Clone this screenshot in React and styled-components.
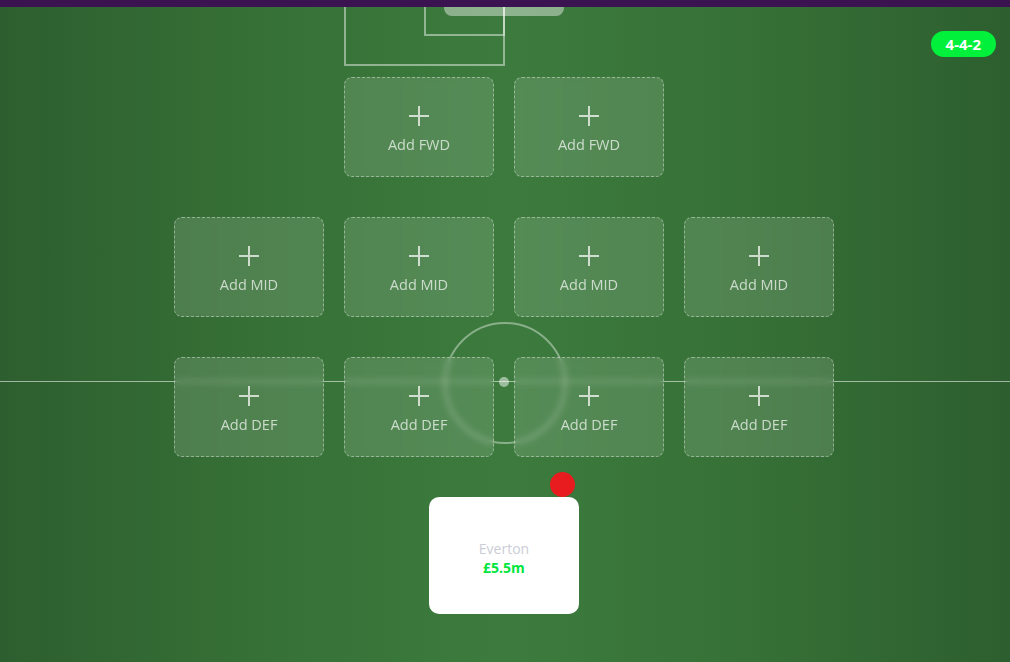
import React from 'react';
import styled, { createGlobalStyle } from 'styled-components';

const GlobalStyle = createGlobalStyle`
  html, body {
    margin: 0;
    padding: 0;
    background: #2e5f30;
  }
  body {
    font-family: "Open Sans", "Noto Sans", sans-serif;
  }
`;

const rows = [
  { pos: 'FWD', count: 2 },
  { pos: 'MID', count: 4 },
  { pos: 'DEF', count: 4 },
];

function PlusIcon() {
  return (
    <svg width="22" height="22" viewBox="0 0 22 22" fill="none">
      <path d="M11 1v20M1 11h20" stroke="rgba(255,255,255,0.72)" strokeWidth="2" />
    </svg>
  );
}

export default function App() {
  return (
    <>
      <GlobalStyle />
      <TopBar />
      <Pitch>
        {/* pitch markings */}
        <PenaltyBox />
        <SixYardBox />
        <GoalPill />
        <HalfwayLine />
        <CentreCircle />
        <CentreSpot />

        <FormationBadge>4-4-2</FormationBadge>

        <Lines>
          {rows.map(row => (
            <Row key={row.pos}>
              {Array.from({ length: row.count }).map((_, i) => (
                <EmptySlot key={i}>
                  <PlusIcon />
                  <SlotLabel>Add {row.pos}</SlotLabel>
                </EmptySlot>
              ))}
            </Row>
          ))}
          <Row>
            <PlayerCard>
              <RemoveDot />
              <Club>Everton</Club>
              <Price>£5.5m</Price>
            </PlayerCard>
          </Row>
        </Lines>
      </Pitch>
    </>
  );
}

const TopBar = styled.div`
  height: 7px;
  background: #3a1350;
`;

const Pitch = styled.div`
  position: relative;
  height: 655px;
  overflow: hidden;
  background: linear-gradient(
    90deg,
    #2d5e2f 0%,
    #367036 25%,
    #3c7b3d 50%,
    #367036 75%,
    #2d5e2f 100%
  );
`;

const PenaltyBox = styled.div`
  position: absolute;
  left: 344px;
  top: -7px;
  width: 157px;
  height: 64px;
  border: 2px solid rgba(255, 255, 255, 0.45);
  border-top: none;
`;

const SixYardBox = styled.div`
  position: absolute;
  left: 424px;
  top: -7px;
  width: 77px;
  height: 34px;
  border: 2px solid rgba(255, 255, 255, 0.45);
  border-top: none;
`;

const GoalPill = styled.div`
  position: absolute;
  left: 444px;
  top: -8px;
  width: 120px;
  height: 17px;
  border-radius: 8px;
  background: rgba(255, 255, 255, 0.42);
`;

const HalfwayLine = styled.div`
  position: absolute;
  left: 0;
  right: 0;
  top: 374px;
  height: 1px;
  background: rgba(255, 255, 255, 0.55);
`;

const CentreCircle = styled.div`
  position: absolute;
  left: 444px;
  top: 315px;
  width: 118px;
  height: 118px;
  border-radius: 50%;
  border: 2px solid rgba(255, 255, 255, 0.4);
`;

const CentreSpot = styled.div`
  position: absolute;
  left: 499px;
  top: 370px;
  width: 10px;
  height: 10px;
  border-radius: 50%;
  background: rgba(255, 255, 255, 0.5);
`;

const FormationBadge = styled.div`
  position: absolute;
  top: 24px;
  right: 14px;
  height: 26px;
  padding: 0 15px;
  border-radius: 13px;
  background: #00f03c;
  color: #fff;
  font-size: 15px;
  font-weight: 700;
  display: flex;
  align-items: center;
`;

const Lines = styled.div`
  position: relative;
  display: flex;
  flex-direction: column;
  align-items: center;
  gap: 40px;
  padding-top: 70px;
  padding-right: 2px;
`;

const Row = styled.div`
  display: flex;
  justify-content: center;
  gap: 20px;
`;

const EmptySlot = styled.div`
  width: 150px;
  height: 100px;
  box-sizing: border-box;
  border: 1px dashed rgba(255, 255, 255, 0.4);
  border-radius: 8px;
  background: rgba(255, 255, 255, 0.13);
  backdrop-filter: blur(3px);
  display: flex;
  flex-direction: column;
  align-items: center;
  justify-content: center;
  gap: 8px;
  padding-top: 4px;
`;

const SlotLabel = styled.span`
  color: rgba(255, 255, 255, 0.7);
  font-size: 14.5px;
  line-height: 19px;
`;

const PlayerCard = styled.div`
  position: relative;
  width: 150px;
  height: 117px;
  border-radius: 10px;
  background: #fff;
  display: flex;
  flex-direction: column;
  align-items: center;
  justify-content: center;
  padding-top: 6px;
  box-sizing: border-box;
`;

const RemoveDot = styled.div`
  position: absolute;
  top: -25px;
  right: 4px;
  width: 25px;
  height: 25px;
  border-radius: 50%;
  background: #e81c1f;
`;

const Club = styled.span`
  color: #cbcdd6;
  font-size: 14px;
  line-height: 19px;
`;

const Price = styled.span`
  color: #00e63c;
  font-size: 14px;
  font-weight: 700;
  line-height: 20px;
`;
